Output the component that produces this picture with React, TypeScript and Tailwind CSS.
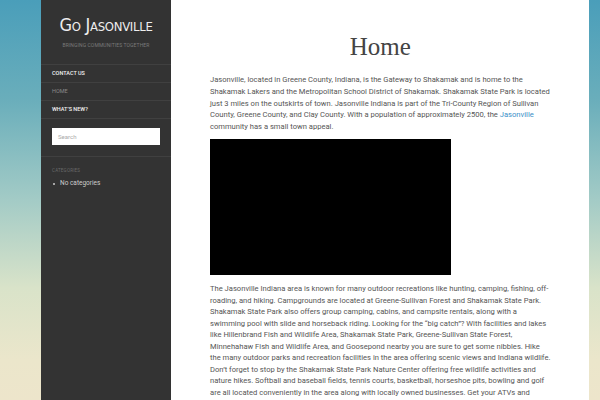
import React from "react"

const intro = [
  "Jasonville, located in Greene County, Indiana, is the Gateway to Shakamak and is home to the",
  "Shakamak Lakers and the Metropolitan School District of Shakamak. Shakamak State Park is located",
  "just 3 miles on the outskirts of town. Jasonville Indiana is part of the Tri-County Region of Sullivan",
]

const outdoors = [
  "The Jasonville Indiana area is known for many outdoor recreations like hunting, camping, fishing, off-",
  "roading, and hiking. Campgrounds are located at Greene-Sullivan Forest and Shakamak State Park.",
  "Shakamak State Park also offers group camping, cabins, and campsite rentals, along with a",
  "swimming pool with slide and horseback riding. Looking for the \u201Cbig catch\u201D? With facilities and lakes",
  "like Hillenbrand Fish and Wildlife Area, Shakamak State Park, Greene-Sullivan State Forest,",
  "Minnehahaw Fish and Wildlife Area, and Goosepond nearby you are sure to get some nibbles. Hike",
  "the many outdoor parks and recreation facilities in the area offering scenic views and Indiana wildlife.",
  "Don\u2019t forget to stop by the Shakamak State Park Nature Center offering free wildlife activities and",
  "nature hikes. Softball and baseball fields, tennis courts, basketball, horseshoe pits, bowling and golf",
  "are all located conveniently in the area along with locally owned businesses. Get your ATVs and",
]

const menu = [
  { label: "CONTACT US", active: true },
  { label: "HOME", active: false },
  { label: "WHAT\u2019S NEW?", active: true },
]

function Sidebar() {
  return (
    <aside className="w-[130px] shrink-0 bg-[#333333] font-['Roboto',sans-serif]">
      <div className="pt-[12px] pb-[14px] text-center">
        <div className="text-[18px] leading-[26px] text-[#eeeeee] font-['DejaVu_Sans_Condensed',sans-serif] font-light [font-variant:small-caps] tracking-[-0.3px]">
          Go Jasonville
        </div>
        <div className="mt-[4px] text-[5px] tracking-[0.1px] text-[#7a7a7a] uppercase">
          Bringing Communities Together
        </div>
      </div>
      <nav className="border-t border-[#404040]">
        {menu.map((m) => (
          <div
            key={m.label}
            className="h-[18px] flex items-center px-[11px] border-b border-[#404040]"
          >
            <span
              className={
                m.active
                  ? "text-[5.5px] font-medium text-[#f2f2f2]"
                  : "text-[5.5px] text-[#8a8a8a]"
              }
            >
              {m.label}
            </span>
          </div>
        ))}
      </nav>
      <div className="px-[11px] pt-[9px] pb-[11px] border-b border-[#404040]">
        <div className="h-[17px] bg-white flex items-center px-[6px] text-[6px] text-[#aaaaaa]">
          Search
        </div>
      </div>
      <div className="px-[11px] pt-[11px]">
        <div className="text-[4.5px] text-[#6a6a6a] uppercase tracking-[0.2px]">Categories</div>
        <div className="mt-[5px] flex items-center gap-[4px] text-[6.5px] text-[#cccccc]">
          <span className="w-[2px] h-[2px] rounded-full bg-[#cccccc] ml-[1px]" />
          <span className="ml-[1px]">No categories</span>
        </div>
      </div>
    </aside>
  )
}

function Lines({ lines }: { lines: React.ReactNode[] }) {
  return (
    <div>
      {lines.map((l, i) => (
        <div key={i} className="whitespace-nowrap">
          {l}
        </div>
      ))}
    </div>
  )
}

export default function App() {
  return (
    <div className="h-[400px] overflow-hidden bg-[linear-gradient(to_bottom,#4a9eba_0%,#6aaebb_25%,#a3cbc6_50%,#d9e3c9_72%,#ebe6cb_90%,#ede5cb_100%)]">
      <div className="mx-[41px] h-[400px] flex">
        <Sidebar />
        <main className="flex-1 bg-white px-[39px] font-['Roboto',sans-serif] text-[#555555]">
          <h1 className="pt-[30px] text-center text-[25px] leading-[34px] text-[#444444] font-['Liberation_Serif',serif]">
            Home
          </h1>
          <div className="mt-[10px] text-[7.6px] leading-[11.8px]">
            <Lines
              lines={[
                ...intro,
                "County, Greene County, and Clay County. With a population of approximately 2500, the ",
              ].map((l, i) =>
                i === 3 ? (
                  <>
                    {l}
                    <span className="text-[#3a8fc8]">Jasonville</span>
                  </>
                ) : (
                  l
                )
              )}
            />
            <div>community has a small town appeal.</div>
          </div>
          <div className="mt-[6px] w-[241px] h-[136px] bg-black" />
          <div className="mt-[8px] text-[7.6px] leading-[11.55px]">
            <Lines lines={outdoors} />
          </div>
        </main>
      </div>
    </div>
  )
}
